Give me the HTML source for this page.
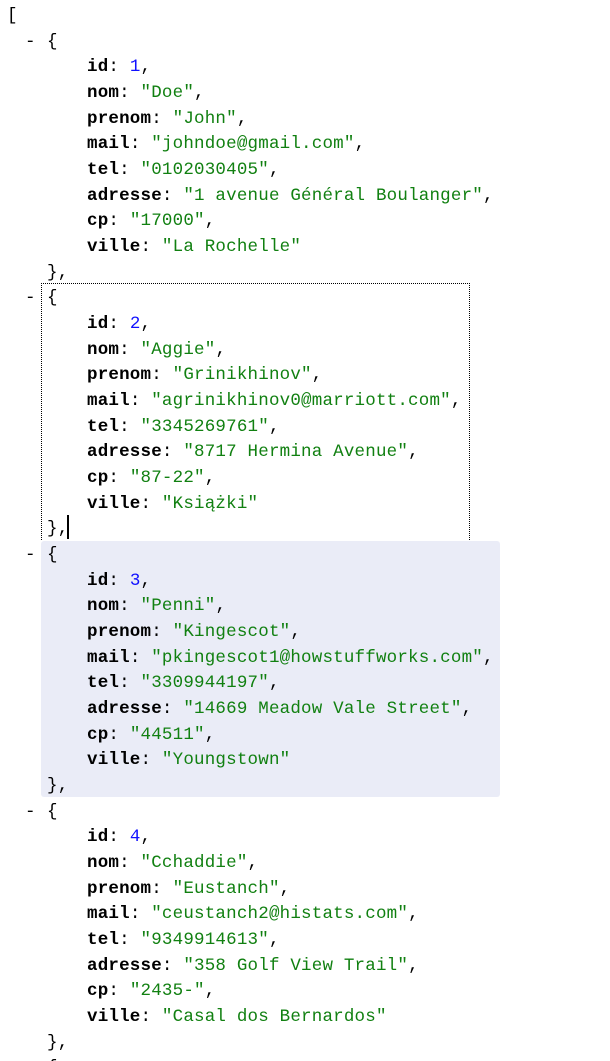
<!DOCTYPE html>
<html><head><meta charset="utf-8"><style>
html,body{margin:0;padding:0;background:#fff;width:610px;height:1061px;overflow:hidden;position:relative}
.l{position:absolute;height:25.67px;line-height:25.67px;font-family:"Liberation Mono",monospace;font-size:17.5px;letter-spacing:0.2px;white-space:pre;color:#000}
.k{font-weight:bold}
.s{color:#118011}
.n{color:#1010ff}
#sel{position:absolute;left:41px;top:283px;width:427px;height:256px;border:1px dotted #000;border-bottom:none}
#hl{position:absolute;left:41px;top:541px;width:459px;height:256px;background:#eaecf7;border-radius:3px}
#caret{position:absolute;left:67px;top:515px;width:2px;height:24px;background:#000}
</style></head><body>
<div id="hl"></div><div id="sel"></div><div id="caret"></div>
<div id="c"></div>
<script>
var objs=[
[1,"Doe","John","johndoe@gmail.com","0102030405","1 avenue Général Boulanger","17000","La Rochelle"],
[2,"Aggie","Grinikhinov","agrinikhinov0@marriott.com","3345269761","8717 Hermina Avenue","87-22","Książki"],
[3,"Penni","Kingescot","pkingescot1@howstuffworks.com","3309944197","14669 Meadow Vale Street","44511","Youngstown"],
[4,"Cchaddie","Eustanch","ceustanch2@histats.com","9349914613","358 Golf View Trail","2435-","Casal dos Bernardos"]];
var keys=["id","nom","prenom","mail","tel","adresse","cp","ville"];
var h="";var L=25.67,T=4;
function line(i,x,html){h+='<div class="l" style="top:'+(T+i*L)+'px;left:'+x+'px">'+html+'</div>';}
line(0,7,'[');
for(var k=0;k<5;k++){var b=1+10*k;
line(b,25,'-');line(b,47,'{');
if(k==4)break;var o=objs[k];
for(var j=0;j<8;j++){var v=j==0?'<span class="n">'+o[0]+'</span>':'<span class="s">"'+o[j]+'"</span>';
line(b+1+j,87,'<span class="k">'+keys[j]+'</span>: '+v+(j<7?',':''));}
line(b+9,47,'},');}
document.getElementById('c').innerHTML=h;
</script>
</body></html>
